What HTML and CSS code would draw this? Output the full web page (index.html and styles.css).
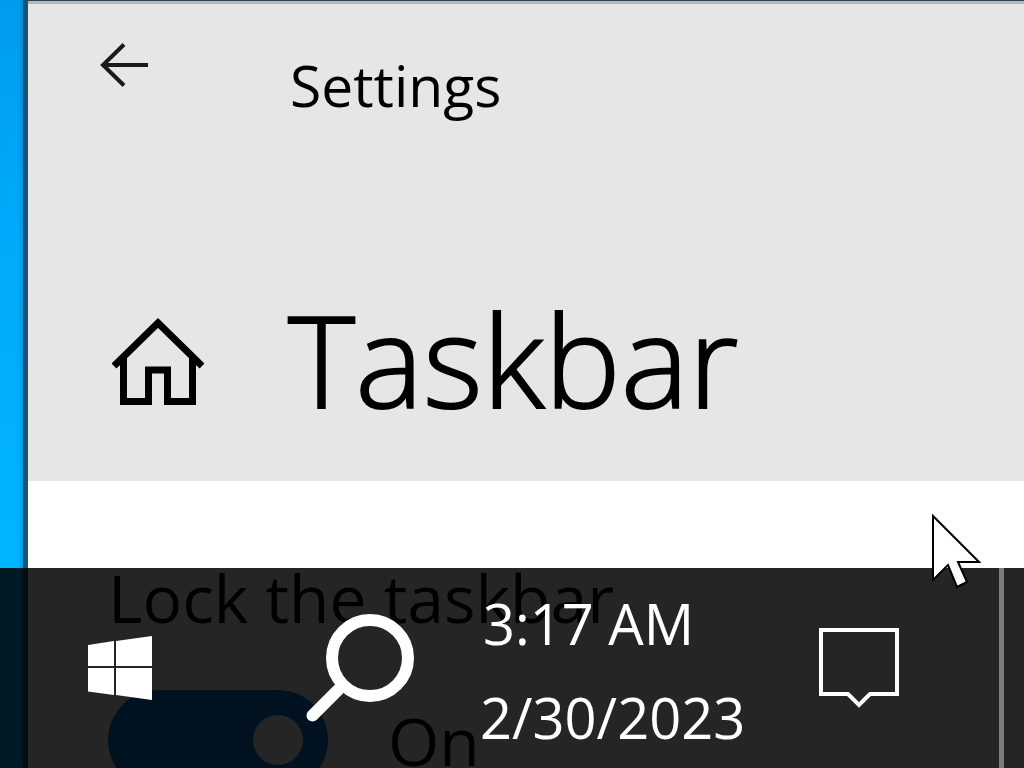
FILE: index.html
```html
<!DOCTYPE html>
<html lang="en">
<head>
    <meta charset="UTF-8">
    <meta name="viewport" content="width=device-width, initial-scale=1.0">
    <title>Settings</title>
    <link rel="stylesheet" href="styles.css">
</head>
<body>
    <main class="window">
        <header class="header">
            <div class="titlebar">
                <button type="button" class="icon-button back" aria-label="Back">
                    <svg width="48" height="44" viewBox="0 0 48 44" fill="none" stroke="#1a1a1a" stroke-width="4">
                        <path d="M24 1.5L3 22L24 42.5M3 22H48"/>
                    </svg>
                </button>
                <span class="app-name">Settings</span>
            </div>
            <div class="page-title">
                <button type="button" class="icon-button home" aria-label="Home">
                    <svg width="92" height="92" viewBox="0 0 92 92" fill="none" stroke="#000" stroke-width="7">
                        <path d="M2 53L46 10L90 53"/>
                        <path d="M11.5 44V88.5H36.5V57H55.5V88.5H80.5V44"/>
                    </svg>
                </button>
                <h1>Taskbar</h1>
            </div>
        </header>

        <section class="setting">
            <label for="lockTaskbar">Lock the taskbar</label>
            <div class="toggle-row">
                <input type="checkbox" id="lockTaskbar" class="toggle" checked>
                <span>On</span>
            </div>
        </section>
    </main>

    <footer class="taskbar">
        <button type="button" class="icon-button task-button" aria-label="Start">
            <svg width="64" height="64" viewBox="0 0 64 64" fill="#fff">
                <path d="M0 9L26 5V30H0Z"/>
                <path d="M28 5L64 0V30H28Z"/>
                <path d="M0 32H26V59L0 55.5Z"/>
                <path d="M28 32H64V64L28 59Z"/>
            </svg>
        </button>
        <button type="button" class="icon-button task-button" aria-label="Search">
            <svg width="108" height="108" viewBox="0 0 108 108" fill="none" stroke="#fff" stroke-width="12">
                <circle cx="64" cy="44" r="38"/>
                <path d="M6.5 101.5L36 72" stroke-linecap="round"/>
            </svg>
        </button>
        <div class="clock">
            <time>3:17 AM</time>
            <span>2/30/2023</span>
        </div>
        <button type="button" class="icon-button task-button" aria-label="Notifications">
            <svg width="80" height="80" viewBox="0 0 80 80" fill="none" stroke="#fff" stroke-width="4">
                <path d="M2 2H78V66H51L40 77L29 66H2Z"/>
            </svg>
        </button>
        <button type="button" class="show-desktop" aria-label="Show desktop"></button>
    </footer>

    <svg class="cursor" width="50" height="76" viewBox="0 0 50 76" fill="#fff" stroke="#000" stroke-width="2">
        <path d="M2 3V67L17 52L26 74L36 69L27 49H48Z"/>
    </svg>
</body>
</html>
```

FILE: styles.css
```css
* {
    box-sizing: border-box;
}

body {
    margin: 0;
    height: 100vh;
    overflow: hidden;
    display: flex;
    font-family: "Segoe UI", "Open Sans", "Noto Sans", sans-serif;
    font-size: 57px;
    color: #000;
    background: linear-gradient(#009cf0, #00a8fa 25%, #00b4ff 70%);
}

button {
    font: inherit;
    padding: 0;
    border: none;
    background: none;
}

svg {
    display: block;
}

.icon-button {
    display: flex;
    align-items: center;
    justify-content: center;
}

/* Settings window */
.window {
    flex: 1;
    margin-left: 23px;
    border-left: 5px solid #1e5272;
    border-top: 1px solid #2f434c;
    background-color: #fff;
    box-shadow: 0 0 6px rgba(0, 40, 90, 0.35);
}

.header {
    height: 480px;
    border-top: 3px solid #adb9be;
    background-color: #e6e6e6;
}

.titlebar {
    display: flex;
    align-items: flex-start;
    padding: 39px 72px 0;
}

.app-name {
    margin: 10px 0 0 142px;
    line-height: 64px;
}

.page-title {
    display: flex;
    align-items: center;
    margin-top: 162px;
    padding-left: 84px;
}

/* light weight, thickened a little to sit between light and regular */
.page-title h1 {
    margin: 0 0 0 84px;
    font-size: 128px;
    font-weight: 300;
    line-height: 160px;
    -webkit-text-stroke: 2px #000;
}

.setting {
    padding: 76px 80px 0;
    font-size: 66px;
    line-height: 80px;
}

.toggle-row {
    display: flex;
    align-items: center;
    gap: 60px;
    margin-top: 53px;
}

.toggle {
    appearance: none;
    display: flex;
    align-items: center;
    justify-content: flex-end;
    width: 220px;
    height: 100px;
    margin: 0;
    padding-right: 25px;
    border-radius: 50px;
    background-color: #0078d7;
}

.toggle::before {
    content: "";
    width: 50px;
    height: 50px;
    border-radius: 50%;
    background-color: #fff;
}

/* Taskbar */
.taskbar {
    position: fixed;
    left: 0;
    right: 0;
    bottom: 0;
    display: flex;
    align-items: stretch;
    height: 200px;
    color: #fff;
    background-color: rgba(0, 0, 0, 0.855);
}

.task-button {
    width: 240px;
}

.clock {
    display: flex;
    flex-direction: column;
    justify-content: center;
    width: 259px;
    padding-top: 4px;
    font-size: 56px;
    line-height: 94px;
    white-space: nowrap;
}

.clock time {
    padding-left: 3px;
}

.show-desktop {
    width: 25px;
    margin-left: auto;
    border-left: 5px solid #7d7d7d;
}

.cursor {
    position: fixed;
    left: 931px;
    top: 513px;
}
```
